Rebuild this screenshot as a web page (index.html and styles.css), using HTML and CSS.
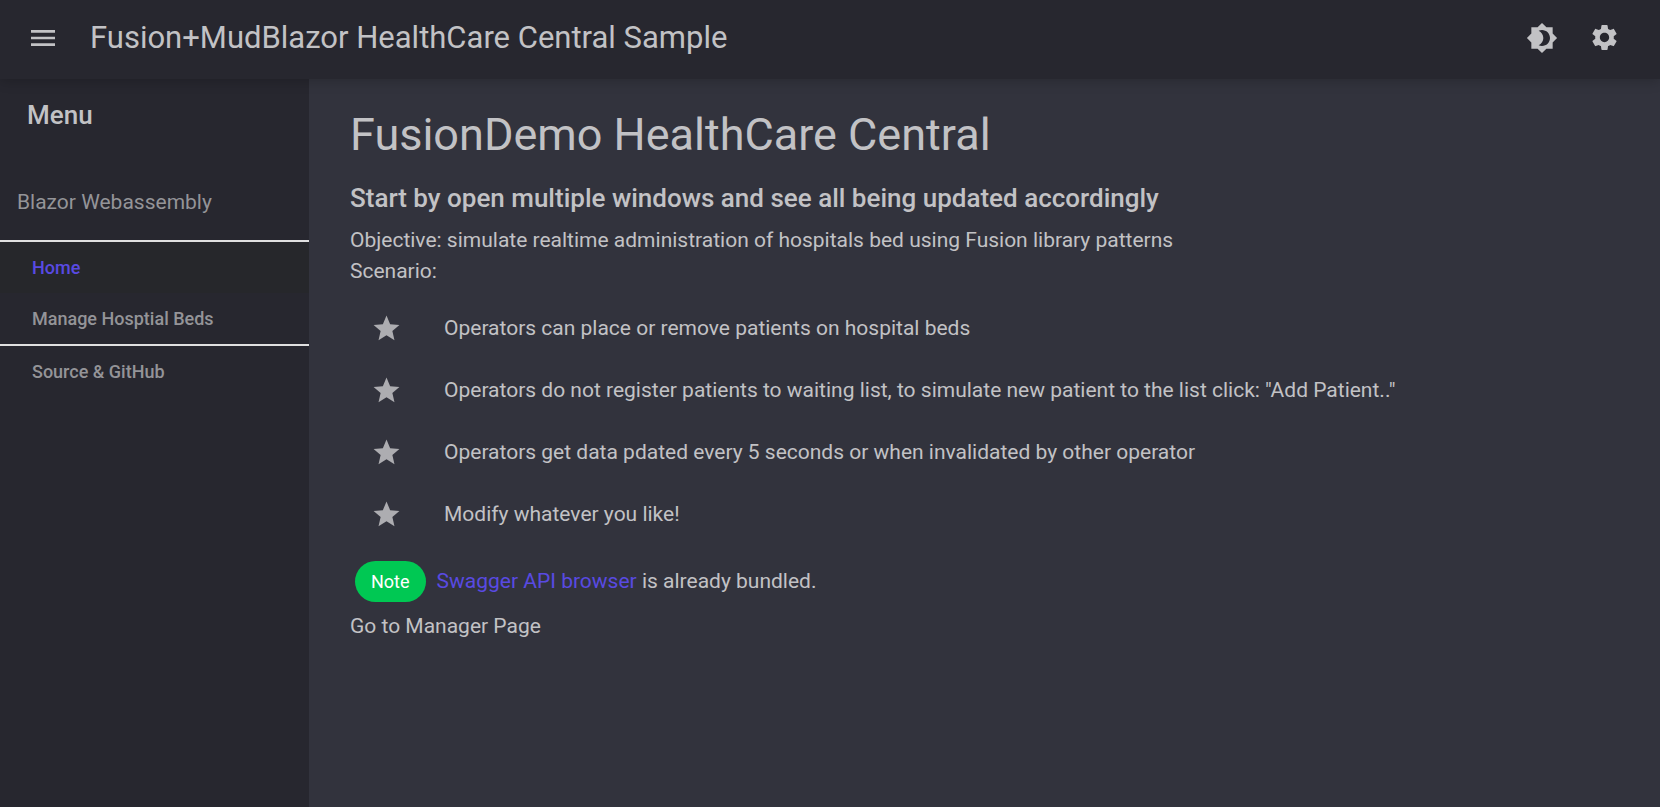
FILE: index.html
```html
<!DOCTYPE html>
<html lang="en">
<head>
<meta charset="utf-8">
<title>Fusion+MudBlazor HealthCare Central Sample</title>
<link rel="stylesheet" href="styles.css">
</head>
<body class="app">
<header class="appbar">
  <button class="icon-button" type="button" aria-label="Toggle menu">
    <svg class="icon icon-large" viewBox="0 0 24 24"><path d="M3 18h18v-2H3v2zm0-5h18v-2H3v2zm0-7v2h18V6H3z"/></svg>
  </button>
  <span class="appbar-title">Fusion+MudBlazor HealthCare Central Sample</span>
  <div class="appbar-actions">
    <button class="icon-button" type="button" aria-label="Toggle theme">
      <svg class="icon icon-large" viewBox="0 0 24 24"><path d="M20 8.69V4h-4.69L12 .69 8.69 4H4v4.69L.69 12 4 15.31V20h4.69L12 23.31 15.31 20H20v-4.69L23.31 12 20 8.69zM12 18c-.89 0-1.74-.2-2.5-.55C11.56 16.5 13 14.42 13 12s-1.44-4.5-3.5-5.45C10.260 6.200 11.110 6 12 6c3.310 0 6 2.690 6 6s-2.690 6-6 6z"/></svg>
    </button>
    <button class="icon-button" type="button" aria-label="Settings">
      <svg class="icon" viewBox="0 0 24 24"><path d="M19.140 12.940c.04-.3.060-.610.060-.940 0-.320-.020-.640-.070-.940l2.030-1.580c.180-.140.230-.410.120-.610l-1.920-3.320c-.120-.220-.370-.290-.590-.220l-2.390.960c-.5-.380-1.030-.7-1.620-.940l-.360-2.540c-.040-.240-.240-.410-.480-.410h-3.840c-.240 0-.430.170-.470.410l-.360 2.540c-.590.240-1.130.570-1.620.940l-2.390-.960c-.220-.080-.470 0-.590.220L2.740 8.870c-.120.210-.080.470.120.610l2.030 1.580c-.050.300-.090.630-.090.940s.020.640.070.940l-2.030 1.580c-.180.140-.230.410-.120.610l1.920 3.320c.120.220.370.290.590.220l2.390-.960c.5.380 1.030.7 1.620.940l.360 2.540c.050.240.240.410.480.410h3.840c.240 0 .440-.170.470-.410l.360-2.540c.590-.240 1.130-.560 1.620-.940l2.390.960c.220.080.470 0 .590-.220l1.920-3.320c.120-.220.070-.470-.120-.610l-2.010-1.580zM12 15.600c-1.980 0-3.600-1.620-3.600-3.600s1.620-3.600 3.600-3.600 3.600 1.620 3.600 3.600-1.620 3.600-3.600 3.600z"/></svg>
    </button>
  </div>
</header>
<div class="layout">
  <aside class="drawer">
    <h2 class="drawer-title">Menu</h2>
    <p class="drawer-caption">Blazor Webassembly</p>
    <nav class="nav">
      <a class="nav-link nav-link-active" href="#">Home</a>
      <a class="nav-link" href="#">Manage Hosptial Beds</a>
      <a class="nav-link nav-link-divided" href="#">Source &amp; GitHub</a>
    </nav>
  </aside>
  <main class="content">
    <h1 class="page-title">FusionDemo HealthCare Central</h1>
    <h2 class="page-subtitle">Start by open multiple windows and see all being updated accordingly</h2>
    <p class="text">Objective: simulate realtime administration of hospitals bed using Fusion library patterns</p>
    <p class="text">Scenario:</p>
    <ul class="list">
      <li class="list-item"><svg class="icon icon-star" viewBox="0 0 24 24"><path d="M12 17.270L18.180 21l-1.640-7.030L22 9.240l-7.190-.610L12 2 9.190 8.630 2 9.240l5.460 4.730L5.820 21z"/></svg><span>Operators can place or remove patients on hospital beds</span></li>
      <li class="list-item"><svg class="icon icon-star" viewBox="0 0 24 24"><path d="M12 17.270L18.180 21l-1.640-7.030L22 9.240l-7.190-.610L12 2 9.190 8.630 2 9.240l5.460 4.730L5.820 21z"/></svg><span>Operators do not register patients to waiting list, to simulate new patient to the list click: "Add Patient.."</span></li>
      <li class="list-item"><svg class="icon icon-star" viewBox="0 0 24 24"><path d="M12 17.270L18.180 21l-1.640-7.030L22 9.240l-7.190-.610L12 2 9.190 8.630 2 9.240l5.460 4.730L5.820 21z"/></svg><span>Operators get data pdated every 5 seconds or when invalidated by other operator</span></li>
      <li class="list-item"><svg class="icon icon-star" viewBox="0 0 24 24"><path d="M12 17.270L18.180 21l-1.640-7.030L22 9.240l-7.190-.610L12 2 9.190 8.630 2 9.240l5.460 4.730L5.820 21z"/></svg><span>Modify whatever you like!</span></li>
    </ul>
    <div class="note">
      <span class="chip">Note</span>
      <p class="text"><a class="link" href="#">Swagger API browser</a> is already bundled.</p>
    </div>
    <p class="text"><a class="plain-link" href="#">Go to Manager Page</a></p>
  </main>
</div>
</body>
</html>
```
FILE: styles.css
```css
* {
  box-sizing: border-box;
}

.app {
  display: flex;
  flex-direction: column;
  min-height: 100vh;
  margin: 0;
  background: #32333d;
  color: #c2c2c5;
  font-family: Roboto, sans-serif;
  font-size: 21px;
  line-height: 31px;
}

h1, h2, p, ul {
  margin: 0;
  padding: 0;
}

.appbar {
  position: relative;
  z-index: 1;
  display: flex;
  align-items: center;
  padding: 12px 40px 16px 27px;
  background: #27272f;
  box-shadow: 0 2px 12px rgba(0, 0, 0, 0.2);
}

.appbar-title {
  margin-left: 31px;
  font-size: 31px;
  line-height: 51px;
}

.appbar-actions {
  display: flex;
  gap: 31px;
  margin-left: auto;
}

.icon-button {
  display: flex;
  align-items: center;
  justify-content: center;
  padding: 0;
  border: 0;
  background: none;
  color: inherit;
}

.icon {
  width: 31px;
  height: 31px;
  flex: none;
  fill: #c2c2c5;
}

.icon-large {
  width: 32px;
  height: 32px;
}

.icon-star {
  fill: #adadb1;
}

.layout {
  display: flex;
  flex: 1;
}

.drawer {
  width: 309px;
  flex: none;
  background: #27272f;
}

.drawer-title {
  padding: 16px 27px;
  font-size: 26px;
  font-weight: 500;
  line-height: 41px;
}

.drawer-caption {
  padding: 35px 17px 22px;
  color: #949498;
}

.nav {
  border-top: 2px solid #e0e0e0;
}

.nav-link {
  display: block;
  padding: 10px 32px;
  color: #949498;
  font-size: 18px;
  font-weight: 500;
  line-height: 31px;
  text-decoration: none;
}

.nav-link-active {
  background: #26272b;
  color: #594ae2;
}

.nav-link-divided {
  border-top: 2px solid #e0e0e0;
}

.content {
  flex: 1;
  padding: 29px 41px;
}

.page-title {
  margin-bottom: 16px;
  font-size: 45px;
  font-weight: 400;
  line-height: 54px;
}

.page-subtitle {
  margin-bottom: 6px;
  font-size: 26px;
  font-weight: 500;
  line-height: 41px;
}

.list {
  padding: 10px 0;
  list-style: none;
}

.list-item {
  display: flex;
  align-items: center;
  gap: 42px;
  padding: 15px 21px;
  line-height: 32px;
}

.note {
  display: flex;
  align-items: center;
  gap: 11px;
  padding: 6px 5px 9px;
}

.chip {
  padding: 0 16px;
  border-radius: 21px;
  background: #00c853;
  color: #ffffff;
  font-size: 18px;
  line-height: 41px;
}

.link {
  color: #594ae2;
  text-decoration: none;
}

.plain-link {
  color: inherit;
  text-decoration: none;
}
```
